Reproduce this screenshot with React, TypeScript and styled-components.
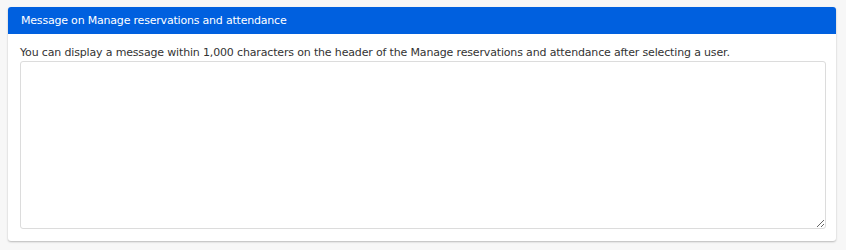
import React from 'react';
import styled, { createGlobalStyle } from 'styled-components';

const GlobalStyle = createGlobalStyle`
  body {
    margin: 0;
    background: #f7f7f7;
    font-family: Tahoma, "DejaVu Sans", Verdana, sans-serif;
  }
`;

const SPage = styled.div`
  padding: 7px 10px 8px 8px;
`;

const SPanel = styled.section`
  background: #ffffff;
  border-radius: 3px;
  box-shadow: 0 1px 2px rgba(0, 0, 0, 0.25);
  display: flex;
  flex-direction: column;
`;

const SHeader = styled.h2`
  background: #0060df;
  border-radius: 3px 3px 0 0;
  color: #ffffff;
  font-size: 11px;
  font-weight: normal;
  height: 27px;
  letter-spacing: -0.2px;
  line-height: 27px;
  margin: 0;
  padding: 0 13px;
`;

const SBody = styled.div`
  display: flex;
  flex-direction: column;
  gap: 1px;
  padding: 12px 10px 12px 12px;
`;

const SNote = styled.p`
  color: #333333;
  font-size: 11px;
  letter-spacing: -0.16px;
  line-height: 14px;
  margin: 0;
`;

const STextarea = styled.textarea`
  border: 1px solid #dcdcdc;
  border-radius: 3px;
  box-sizing: border-box;
  height: 168px;
  resize: vertical;
  width: 100%;
`;

const App: React.FC = () => (
  <SPage>
    <GlobalStyle />
    <SPanel>
      <SHeader>Message on Manage reservations and attendance</SHeader>
      <SBody>
        <SNote>
          You can display a message within 1,000 characters on the header of the Manage
          reservations and attendance after selecting a user.
        </SNote>
        <STextarea />
      </SBody>
    </SPanel>
  </SPage>
);

export default App;
